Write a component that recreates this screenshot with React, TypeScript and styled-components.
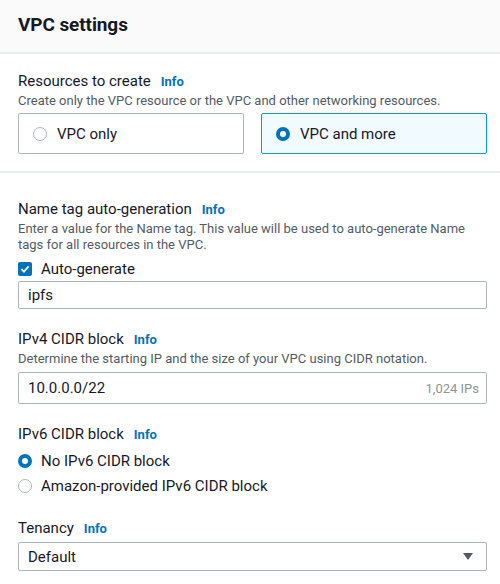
import React from "react";
import styled, { createGlobalStyle } from "styled-components";

const Global = createGlobalStyle`
  html, body { margin: 0; padding: 0; background: #ffffff; }
  body { font-family: Roboto, "Liberation Sans", Arial, sans-serif; color: #16191f; }
  * { box-sizing: border-box; }
`;

const Page = styled.div`
  width: 500px;
  background: #ffffff;
`;

const Header = styled.header`
  height: 54px;
  background: #fafafa;
  border-bottom: 2px solid #eaeded;
  display: flex;
  align-items: center;
  padding: 0 18px 4px;
`;

const Title = styled.h2`
  margin: 0;
  font-size: 19px;
  font-weight: 700;
  color: #16191f;
  letter-spacing: -0.1px;
`;

const Section = styled.section<{ $top: number; $bottom: number; $divider?: boolean }>`
  padding: ${(p) => p.$top}px 13px ${(p) => p.$bottom}px 18px;
  border-bottom: ${(p) => (p.$divider ? "2px solid #eaeded" : "none")};
  display: flex;
  flex-direction: column;
  gap: 20px;
`;

const Field = styled.div`
  display: flex;
  flex-direction: column;
`;

const LabelRow = styled.div`
  display: flex;
  align-items: baseline;
  gap: 10px;
  height: 20px;
  font-size: 15px;
  line-height: 20px;
  color: #16191f;
`;

const Info = styled.a`
  color: #0073bb;
  font-weight: 700;
  font-size: 13px;
  line-height: 20px;
  text-decoration: none;
`;

const Desc = styled.div`
  font-size: 13px;
  line-height: 16px;
  color: #545b64;
  margin-top: 2px;
`;

const Tiles = styled.div`
  display: grid;
  grid-template-columns: 1fr 1fr;
  gap: 17px;
  margin-top: 4px;
`;

const Tile = styled.div<{ $selected?: boolean }>`
  height: 41px;
  border: 1px solid ${(p) => (p.$selected ? "#00a1c9" : "#aab7b8")};
  background: ${(p) => (p.$selected ? "#f1faff" : "#ffffff")};
  border-radius: 2px;
  display: flex;
  align-items: center;
  gap: 10px;
  padding-left: 14px;
  font-size: 15px;
  color: #16191f;
`;

const RadioDot = styled.span<{ $checked?: boolean }>`
  width: 14px;
  height: 14px;
  border-radius: 50%;
  flex: none;
  background: #ffffff;
  border: ${(p) => (p.$checked ? "4px solid #0073bb" : "1px solid #aab7b8")};
`;

const OptionRow = styled.div`
  display: flex;
  align-items: center;
  gap: 9px;
  height: 25px;
  font-size: 15px;
  color: #16191f;
`;

const CheckBox = styled.span`
  width: 14px;
  height: 14px;
  border-radius: 2px;
  background: #0073bb;
  display: flex;
  align-items: center;
  justify-content: center;
  flex: none;
`;

const CheckRow = styled.div`
  display: flex;
  align-items: center;
  gap: 9px;
  height: 20px;
  margin-top: 6px;
  font-size: 15px;
  color: #16191f;
`;

const InputBox = styled.div<{ $h: number; $mt: number; $pr: number }>`
  height: ${(p) => p.$h}px;
  margin-top: ${(p) => p.$mt}px;
  border: 1px solid #aab7b8;
  border-radius: 2px;
  display: flex;
  align-items: center;
  justify-content: space-between;
  padding: 0 ${(p) => p.$pr}px 0 9px;
  font-size: 15px;
  color: #16191f;
  background: #ffffff;
`;

const Hint = styled.span`
  font-size: 13px;
  color: #879596;
`;

const Radios = styled.div`
  display: flex;
  flex-direction: column;
  margin-top: 4px;
`;

function Label({ text }: { text: string }) {
  return (
    <LabelRow>
      <span>{text}</span>
      <Info href="#">Info</Info>
    </LabelRow>
  );
}

export default function App() {
  return (
    <Page>
      <Global />
      <Header>
        <Title>VPC settings</Title>
      </Header>
      <Section $top={17} $bottom={17} $divider>
        <Field>
          <Label text="Resources to create" />
          <Desc>Create only the VPC resource or the VPC and other networking resources.</Desc>
          <Tiles>
            <Tile>
              <RadioDot />
              VPC only
            </Tile>
            <Tile $selected>
              <RadioDot $checked />
              VPC and more
            </Tile>
          </Tiles>
        </Field>
      </Section>
      <Section $top={26} $bottom={10}>
        <Field>
          <Label text="Name tag auto-generation" />
          <Desc>
            Enter a value for the Name tag. This value will be used to auto-generate Name tags for all
            resources in the VPC.
          </Desc>
          <CheckRow>
            <CheckBox>
              <svg width="10" height="10" viewBox="0 0 10 10">
                <path d="M1.5 5.2 L4 7.6 L8.6 2.4" fill="none" stroke="#fff" strokeWidth="1.8" />
              </svg>
            </CheckBox>
            Auto-generate
          </CheckRow>
          <InputBox $h={28} $mt={2} $pr={14}>ipfs</InputBox>
        </Field>
        <Field>
          <Label text="IPv4 CIDR block" />
          <Desc>Determine the starting IP and the size of your VPC using CIDR notation.</Desc>
          <InputBox $h={32} $mt={5} $pr={7}>
            <span>10.0.0.0/22</span>
            <Hint>1,024 IPs</Hint>
          </InputBox>
        </Field>
        <Field>
          <Label text="IPv6 CIDR block" />
          <Radios>
            <OptionRow>
              <RadioDot $checked />
              No IPv6 CIDR block
            </OptionRow>
            <OptionRow>
              <RadioDot />
              Amazon-provided IPv6 CIDR block
            </OptionRow>
          </Radios>
        </Field>
        <Field>
          <Label text="Tenancy" />
          <InputBox $h={29} $mt={4} $pr={13}>
            <span>Default</span>
            <svg width="10" height="7" viewBox="0 0 10 7">
              <path d="M0 0 H10 L5 7 Z" fill="#545b64" />
            </svg>
          </InputBox>
        </Field>
      </Section>
    </Page>
  );
}
